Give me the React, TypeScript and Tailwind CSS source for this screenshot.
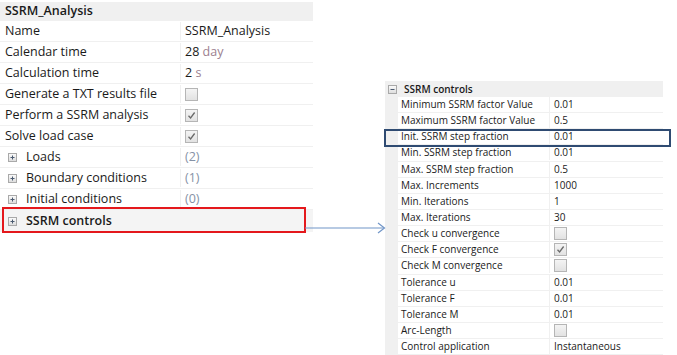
import React from "react";

const Check = ({ checked }: { checked?: boolean }) => (
  <span className="inline-flex h-[13px] w-[13px] items-center justify-center border border-[#b5b5b5] bg-gradient-to-b from-[#f4f4f4] to-[#e2e2e2]">
    {checked && (
      <svg width="9" height="9" viewBox="0 0 9 9">
        <path d="M1.5 4.8 L3.6 7 L7.6 1.5" fill="none" stroke="#6a6a6a" strokeWidth="1.3" />
      </svg>
    )}
  </span>
);

const Box = ({ minus }: { minus?: boolean }) => (
  <span className="inline-flex h-[9px] w-[9px] items-center justify-center border border-[#a9a9a9] bg-gradient-to-b from-[#fafafa] to-[#dedede]">
    <svg width="7" height="7" viewBox="0 0 7 7">
      <path d="M1.5 3.5 H5.5" stroke="#4a5a70" strokeWidth="1" />
      {!minus && <path d="M3.5 1.5 V5.5" stroke="#4a5a70" strokeWidth="1" />}
    </svg>
  </span>
);

type LRow = { label: string; value: React.ReactNode; expand?: boolean };

const leftRows: LRow[] = [
  { label: "Name", value: <span>SSRM_Analysis</span> },
  { label: "Calendar time", value: <span>28 <span className="text-[#9c7f8f]">day</span></span> },
  { label: "Calculation time", value: <span>2 <span className="text-[#9c7f8f]">s</span></span> },
  { label: "Generate a TXT results file", value: <Check /> },
  { label: "Perform a SSRM analysis", value: <Check checked /> },
  { label: "Solve load case", value: <Check checked /> },
  { label: "Loads", value: <span className="text-[#8592a6]">(2)</span>, expand: true },
  { label: "Boundary conditions", value: <span className="text-[#8592a6]">(1)</span>, expand: true },
  { label: "Initial conditions", value: <span className="text-[#8592a6]">(0)</span>, expand: true },
];

type RRow = { label: string; value: React.ReactNode };
const rightRows: RRow[] = [
  { label: "Minimum SSRM factor Value", value: "0.01" },
  { label: "Maximum SSRM factor Value", value: "0.5" },
  { label: "Init. SSRM step fraction", value: "0.01" },
  { label: "Min. SSRM step fraction", value: "0.01" },
  { label: "Max. SSRM step fraction", value: "0.5" },
  { label: "Max. Increments", value: "1000" },
  { label: "Min. Iterations", value: "1" },
  { label: "Max. Iterations", value: "30" },
  { label: "Check u convergence", value: <Check /> },
  { label: "Check F convergence", value: <Check checked /> },
  { label: "Check M convergence", value: <Check /> },
  { label: "Tolerance u", value: "0.01" },
  { label: "Tolerance F", value: "0.01" },
  { label: "Tolerance M", value: "0.01" },
  { label: "Arc-Length", value: <Check /> },
  { label: "Control application", value: "Instantaneous" },
];

export default function App() {
  return (
    <div
      className="relative h-[355px] w-[677px] overflow-hidden bg-white text-[#1a1a1a]"
      style={{ fontFamily: '"Open Sans", "Noto Sans", sans-serif' }}
    >
      <div className="flex">
        {/* Left panel */}
        <div className="mt-[2px] w-[313px] text-[12.5px] font-medium">
          <div className="flex h-[19px] items-center bg-[#f0f0f0] pl-[5px] font-semibold">SSRM_Analysis</div>
          {leftRows.map((r, i) => (
            <div key={i} className="flex h-[21px] items-center border-b border-[#f0f0f0]">
              <div className="flex w-[181px] items-center border-r border-[#f0f0f0] pl-[5px]">
                {r.expand && (
                  <span className="mr-[9px] ml-[3px] flex">
                    <Box />
                  </span>
                )}
                <span>{r.label}</span>
              </div>
              <div className="flex items-center pl-[4px]">{r.value}</div>
            </div>
          ))}
          <div className="flex h-[22px] items-center bg-[#f4f4f4]">
            <span className="mr-[9px] ml-[8px] flex">
              <Box />
            </span>
            <span className="font-semibold">SSRM controls</span>
          </div>
        </div>

        {/* Right panel */}
        <div className="ml-[72px] mt-[81px] w-[278px] text-[10px] font-medium">
          <div className="flex h-[16px] items-center bg-[#f0f0f0]">
            <span className="ml-[3px] mr-[7px] flex">
              <Box minus />
            </span>
            <span className="font-semibold">SSRM controls</span>
          </div>
          <div className="flex">
            <div className="w-[13px] bg-[#f0f0f0]" />
            <div className="flex-1">
              {rightRows.map((r, i) => (
                <div key={i} className="flex h-[16.15px] items-center border-b border-[#f0f0f0]">
                  <div className="w-[152px] border-r border-[#f0f0f0] pl-[3px]">{r.label}</div>
                  <div className="flex items-center pl-[4px]">{r.value}</div>
                </div>
              ))}
            </div>
          </div>
        </div>
      </div>

      {/* Annotations */}
      <div className="absolute left-[2px] top-[207px] h-[26px] w-[304px] border-2 border-[#e4181c]" />
      <div className="absolute left-[384px] top-[129px] h-[18px] w-[287px] border-2 border-[#2f4b72]" />
      <svg className="absolute left-[305px] top-[220px]" width="82" height="16" viewBox="0 0 82 16">
        <path d="M0 8 H79" stroke="#7196c8" strokeWidth="1.2" fill="none" />
        <path d="M73 3 L79.5 8 L73 13" stroke="#7196c8" strokeWidth="1.2" fill="none" />
      </svg>
    </div>
  );
}
